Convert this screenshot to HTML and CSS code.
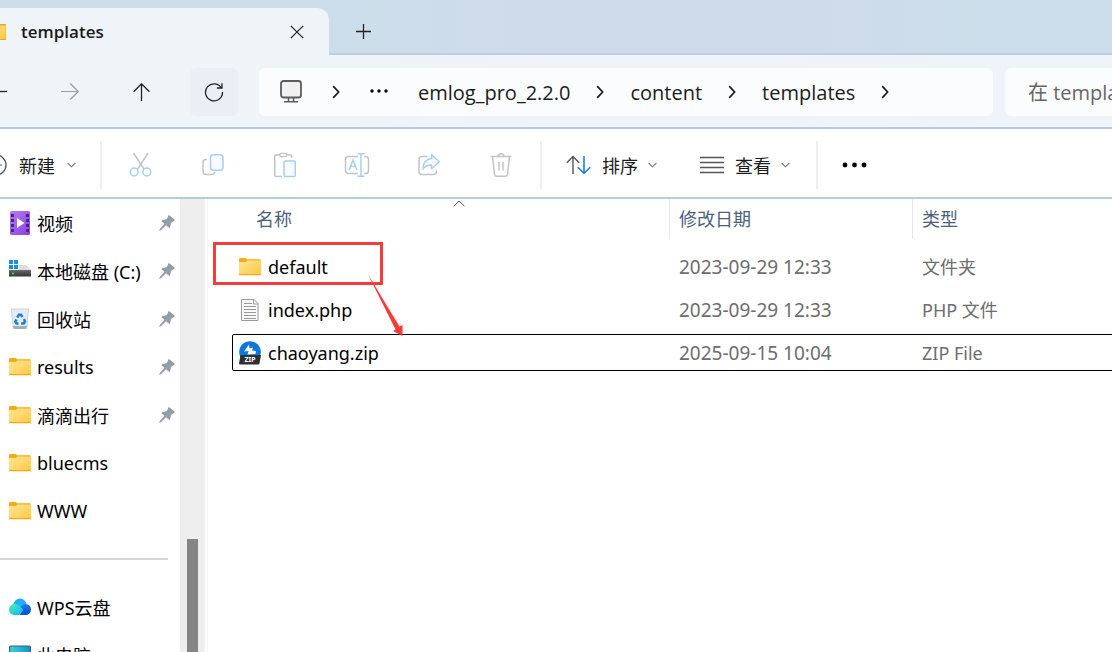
FILE: index.html
```html
<!DOCTYPE html>
<html lang="zh-CN">
	<head>
		<meta charset="UTF-8">
		<title>templates</title>
		<link rel="stylesheet" href="styles.css">
	</head>
	<body>
		<!-- 公用图标 -->
		<svg class="defs" width="0" height="0" aria-hidden="true">
			<defs>
				<linearGradient id="g-folder" x1="0" y1="0" x2="1" y2="1">
					<stop offset="0" stop-color="#ffe69c"/>
					<stop offset="1" stop-color="#ffc83d"/>
				</linearGradient>
				<linearGradient id="g-video" x1="0" y1="0" x2="1" y2="1">
					<stop offset="0" stop-color="#b67cf0"/>
					<stop offset="1" stop-color="#8a3fe0"/>
				</linearGradient>
				<linearGradient id="g-cloud" x1="0" y1="0" x2="1" y2="1">
					<stop offset="0" stop-color="#4ff0a8"/>
					<stop offset="1" stop-color="#08b6ff"/>
				</linearGradient>
				<linearGradient id="g-cloud2" x1="0" y1="0" x2="1" y2="1">
					<stop offset="0" stop-color="#1c8bf5"/>
					<stop offset="1" stop-color="#0a4bd0"/>
				</linearGradient>
				<linearGradient id="g-pc" x1="0" y1="0" x2="1" y2="0">
					<stop offset="0" stop-color="#37d5de"/>
					<stop offset="1" stop-color="#1590cc"/>
				</linearGradient>
				<linearGradient id="g-disk" x1="0" y1="0" x2="0" y2="1">
					<stop offset="0" stop-color="#6a6a6a"/>
					<stop offset="1" stop-color="#333"/>
				</linearGradient>
			</defs>
			<symbol id="i-folder" viewBox="0 0 22 18">
				<path d="M0 1.5Q0 0 1.5 0H6Q7 0 8 1.2H20.5Q22 1.2 22 2.5V8H0z" fill="#f5ad12"/>
				<path d="M0 4H7L8.2 2.5H22V16.5H0z" fill="url(#g-folder)"/>
				<path d="M0 16H22V16.4Q22 17.3 21 17.3H1Q0 17.3 0 16.4z" fill="#eda81f"/>
			</symbol>
			<symbol id="i-pin" viewBox="0 0 16 16">
				<path d="M9.3.5Q10 0 10.7.5L15.4 4.6Q16 5.3 15.2 5.9L13.4 6.7Q12.3 7.2 12 8.2L11 12.4Q10.6 13.3 9.8 12.6L7 10.3L1.5 15.5L.2 15.8L.5 14.5L5.3 8.8L2.8 6.4Q2.3 5.6 3.2 5.2L7.2 4.3Q8 4 8.3 3.2z" fill="#949da5"/>
			</symbol>
			<symbol id="i-right" viewBox="0 0 8 14">
				<path d="M1.2 1.2L6.6 7L1.2 12.8" fill="none" stroke="#1b1b1b" stroke-width="1.7"/>
			</symbol>
			<symbol id="i-down" viewBox="0 0 9 6">
				<path d="M.6 1L4.5 4.8L8.4 1" fill="none" stroke="#777" stroke-width="1.1"/>
			</symbol>
		</svg>

		<div class="window">
			<div class="titlebar">
				<div class="tab">
					<svg class="tab-icon" width="6" height="16" viewBox="16 1 6 16"><path d="M0 1H22V17H0z" fill="#eda81f"/><path d="M0 2.5H21.5V16H0z" fill="url(#g-folder)"/></svg>
					<span class="tab-title">templates</span>
					<button class="icon-btn tab-close" aria-label="关闭"><svg width="14" height="14" viewBox="0 0 14 14"><path d="M.8.8L13.2 13.2M13.2.8L.8 13.2" stroke="#222" stroke-width="1.2"/></svg></button>
				</div>
				<button class="icon-btn tab-add" aria-label="新标签页"><svg width="15" height="15" viewBox="0 0 15 15"><path d="M7.5 0V15M0 7.5H15" stroke="#222" stroke-width="1.3"/></svg></button>
			</div>

			<div class="navbar">
				<div class="nav-btns">
					<button class="nav-btn nav-back" aria-label="后退"><svg width="7" height="20" viewBox="0 0 7 20"><path d="M0 9.5H7" stroke="#222" stroke-width="1.3"/></svg></button>
					<button class="nav-btn" aria-label="前进" disabled><svg width="18" height="18" viewBox="0 0 18 18"><path d="M0 8.5H17.3M9.3.5L17.3 8.5L9.3 16.5" fill="none" stroke="#999ea3" stroke-width="1.2"/></svg></button>
					<button class="nav-btn" aria-label="上移"><svg width="18" height="18" viewBox="0 0 18 18"><path d="M8.5 18V.8M.6 8.8L8.5.8L16.4 8.8" fill="none" stroke="#222" stroke-width="1.3"/></svg></button>
					<button class="nav-btn active" aria-label="刷新"><svg width="20" height="20" viewBox="0 0 20 20"><path d="M17.6 6.5A8.5 8.5 0 1 0 18.5 10M18 1.2V6H12.9" fill="none" stroke="#222" stroke-width="1.3"/></svg></button>
				</div>
				<nav class="address" aria-label="路径">
					<svg width="22" height="25" viewBox="0 0 22 25"><rect x="1" y="1" width="20" height="16.5" rx="2.5" fill="#f1f1f1" stroke="#5c5c5c" stroke-width="1.8"/><path d="M8.5 18V21.5M13.5 18V21.5M4 21.7H18" stroke="#5c5c5c" stroke-width="1.6"/></svg>
					<svg width="8" height="14"><use href="#i-right"/></svg>
					<button class="icon-btn more" aria-label="更多"><svg width="18" height="6" viewBox="0 0 18 6"><circle cx="2" cy="2" r="1.7"/><circle cx="9" cy="2" r="1.7"/><circle cx="16" cy="2" r="1.7"/></svg></button>
					<div class="crumbs">
						<a href="#">emlog_pro_2.2.0</a>
						<svg width="8" height="14"><use href="#i-right"/></svg>
						<a href="#">content</a>
						<svg width="8" height="14"><use href="#i-right"/></svg>
						<a href="#">templates</a>
						<svg width="8" height="14"><use href="#i-right"/></svg>
					</div>
				</nav>
				<input class="search" type="text" placeholder="在 templates 中搜索" aria-label="搜索">
			</div>

			<div class="toolbar">
				<button class="tool-btn new-btn">
					<svg width="7" height="22" viewBox="0 0 7 22"><path d="M-4 1A10 10 0 0 1-4 21" fill="none" stroke="#555" stroke-width="1.3"/><path d="M0 11H2" stroke="#4aa0e0" stroke-width="1.3"/></svg>
					<span>新建</span>
					<svg width="9" height="6"><use href="#i-down"/></svg>
				</button>
				<div class="tool-group">
					<button class="tool-icon" aria-label="剪切" disabled><svg width="24" height="26" viewBox="0 0 24 26"><path d="M4.5 1L15.5 18M19 1L8 18" fill="none" stroke="#c3c3c3" stroke-width="1.5"/><circle cx="5.2" cy="20" r="3.9" fill="#fff" stroke="#a3d0f2" stroke-width="1.5"/><circle cx="17.8" cy="20" r="3.9" fill="#fff" stroke="#a3d0f2" stroke-width="1.5"/></svg></button>
					<button class="tool-icon" aria-label="复制" disabled><svg width="24" height="26" viewBox="0 0 24 26"><path d="M6 7.5H5Q2 7.5 2 10.5V19Q2 22.5 5 22.5H10Q13 22.5 14 20" fill="none" stroke="#c3c3c3" stroke-width="1.5"/><rect x="9.5" y="2.7" width="12.5" height="15.5" rx="3" fill="#f7fbff" stroke="#a3d0f2" stroke-width="1.5"/></svg></button>
					<button class="tool-icon" aria-label="粘贴" disabled><svg width="24" height="26" viewBox="0 0 24 26"><path d="M8 3H3Q1.7 3 1.7 4.3V23Q1.7 24.4 3 24.4H9M13 3H17.5Q18.6 3 18.6 4.3V6" fill="none" stroke="#c3c3c3" stroke-width="1.5"/><rect x="6.7" y="1.4" width="7" height="3.2" rx="1.6" fill="#fff" stroke="#c3c3c3" stroke-width="1.4"/><rect x="11" y="9" width="11.3" height="15.4" rx="1" fill="#f7fbff" stroke="#a3d0f2" stroke-width="1.5"/></svg></button>
					<button class="tool-icon" aria-label="重命名" disabled><svg width="26" height="26" viewBox="0 0 26 26"><path d="M14 4.5H4.5Q1.5 4.5 1.5 7.5V18.5Q1.5 21.5 4.5 21.5H14M20 4.5H21.5Q24.5 4.5 24.5 7.5V18.5Q24.5 21.5 21.5 21.5H20" fill="none" stroke="#c3c3c3" stroke-width="1.5"/><path d="M5 18L9 8L13 18M6.5 14.5H11.5M13.5 1.7H20.5M13.5 24.3H20.5M17 1.7V24.3" fill="none" stroke="#a3d0f2" stroke-width="1.5"/></svg></button>
					<button class="tool-icon" aria-label="共享" disabled><svg width="24" height="26" viewBox="0 0 24 26"><path d="M10 4.5H5Q2 4.5 2 7.5V19.5Q2 22.5 5 22.5H16.5Q19.5 22.5 19.5 19.5V18.5" fill="none" stroke="#c3c3c3" stroke-width="1.5"/><path d="M14.5 2.7L22.3 9.8L14.5 16.8V13Q9 13 6 17Q6.5 7 14.5 6.5z" fill="#f7fbff" stroke="#a3d0f2" stroke-width="1.5" stroke-linejoin="round"/></svg></button>
					<button class="tool-icon" aria-label="删除" disabled><svg width="24" height="26" viewBox="0 0 24 26"><path d="M1.5 4.5H22.5M3.5 4.5L5.5 22.5Q5.7 24.3 7.5 24.3H16.5Q18.3 24.3 18.5 22.5L20.5 4.5M9 4.5Q9 1.7 12 1.7Q15 1.7 15 4.5M10 10V18.5M14 10V18.5" fill="none" stroke="#c3c3c3" stroke-width="1.5"/></svg></button>
				</div>
				<div class="tool-group menus">
					<button class="tool-btn">
						<svg width="26" height="20" viewBox="0 0 26 20"><path d="M7 19V1.5M.8 7.7L7 1.5L13.2 7.7" fill="none" stroke="#555" stroke-width="1.4"/><path d="M18 1V18.3M11.7 12.2L18 18.3L24.3 12.2" fill="none" stroke="#0f7bd4" stroke-width="1.5"/></svg>
						<span>排序</span>
						<svg width="9" height="6"><use href="#i-down"/></svg>
					</button>
					<button class="tool-btn">
						<svg width="25" height="18" viewBox="0 0 25 18"><path d="M0 1.5H24M0 6.5H24M0 11.5H24M0 16.5H24" stroke="#555" stroke-width="1.3"/></svg>
						<span>查看</span>
						<svg width="9" height="6"><use href="#i-down"/></svg>
					</button>
				</div>
				<button class="icon-btn dots" aria-label="更多选项"><svg width="25" height="6" viewBox="0 0 25 6"><circle cx="3" cy="3" r="2.4"/><circle cx="12.5" cy="3" r="2.4"/><circle cx="22" cy="3" r="2.4"/></svg></button>
			</div>

			<div class="content">
				<aside class="sidebar">
					<ul class="side-list">
						<li>
							<svg class="side-icon" viewBox="0 0 22 24"><rect x="1" width="20" height="24" rx="1.5" fill="url(#g-video)"/><path d="M2 3H5V6H2zM2 8H5V11H2zM2 13H5V16H2zM2 18H5V21H2zM17 3H20V6H17zM17 8H20V11H17zM17 13H20V16H17zM17 18H20V21H17z" fill="#47248a"/><path d="M8 7L15.5 12L8 17z" fill="#fff"/></svg>
							<a href="#">视频</a>
							<svg class="pin"><use href="#i-pin"/></svg>
						</li>
						<li>
							<svg class="side-icon" viewBox="0 0 22 24"><path d="M3 6H17L22 11H0z" fill="#dcdcdc"/><path d="M0 11H22V17.5H0z" fill="url(#g-disk)"/><path d="M3 13.5H5V15.5H3z" fill="#2be04b"/><path d="M0 1H10V11H0z" fill="#fff"/><path d="M0 1H4V5H0zM5 1H9V5H5zM0 6H4V10H0zM5 6H9V10H5z" fill="#1590e0"/></svg>
							<a href="#">本地磁盘 (C:)</a>
							<svg class="pin"><use href="#i-pin"/></svg>
						</li>
						<li>
							<svg class="side-icon" viewBox="0 0 22 24"><path d="M2.5 2H19.5L18 20H4z" fill="#e6ebef" stroke="#d0d5d9"/><path d="M4 19H18L17.5 22H4.5z" fill="#a9adb0"/><g fill="none" stroke="#1583d8" stroke-width="2.5"><path d="M8.2 10.5L10 7.8H12L13.5 10"/><path d="M15 12L16 14.5L14.8 16.5H12"/><path d="M9.5 16.5H7.5L6.3 14.5L7.5 12.5"/></g></svg>
							<a href="#">回收站</a>
							<svg class="pin"><use href="#i-pin"/></svg>
						</li>
						<li>
							<svg class="side-icon"><use href="#i-folder"/></svg>
							<a href="#">results</a>
							<svg class="pin"><use href="#i-pin"/></svg>
						</li>
						<li>
							<svg class="side-icon"><use href="#i-folder"/></svg>
							<a href="#">滴滴出行</a>
							<svg class="pin"><use href="#i-pin"/></svg>
						</li>
						<li>
							<svg class="side-icon"><use href="#i-folder"/></svg>
							<a href="#">bluecms</a>
						</li>
						<li>
							<svg class="side-icon"><use href="#i-folder"/></svg>
							<a href="#">WWW</a>
						</li>
						<li class="divider" role="separator"></li>
						<li>
							<svg class="side-icon" viewBox="0 0 22 24"><circle cx="11" cy="10" r="6.5" fill="#25aef8"/><circle cx="16.5" cy="14.5" r="5.5" fill="url(#g-cloud2)"/><path d="M10 20L16 13.5L20 18L16.5 20z" fill="#0d56d8"/><path d="M5.3 9Q8 8.6 10 10.5L14.5 15L10 20H5.5Q0 19.5 0 14.5Q.3 9.5 5.3 9z" fill="url(#g-cloud)"/></svg>
							<a href="#">WPS云盘</a>
						</li>
						<li>
							<svg class="side-icon" viewBox="0 0 22 24"><rect x=".6" y="3" width="20.8" height="15" rx="1" fill="url(#g-pc)" stroke="#4d5d66" stroke-width="1.2"/><path d="M6 21H16" stroke="#777" stroke-width="2"/></svg>
							<a href="#">此电脑</a>
						</li>
					</ul>
					<div class="scrollbar"><div class="thumb"></div></div>
				</aside>

				<main class="files">
					<table class="file-table">
						<thead>
							<tr>
								<th class="name">名称<svg class="sort-mark" width="12" height="7" viewBox="0 0 12 7"><path d="M.6 6.2L6 1L11.4 6.2" fill="none" stroke="#555"/></svg></th>
								<th>修改日期</th>
								<th>类型</th>
							</tr>
						</thead>
						<tbody>
							<tr>
								<td class="name"><svg class="file-icon"><use href="#i-folder"/></svg>default</td>
								<td class="date">2023-09-29 12:33</td>
								<td>文件夹</td>
							</tr>
							<tr>
								<td class="name"><svg class="file-icon" viewBox="0 0 22 24"><path d="M2.5 1.5H15L19 5.5V22.5H2.5z" fill="#fafafa" stroke="#999"/><path d="M14.5 1.5V6H19" fill="none" stroke="#999"/><path d="M5 5.5H13M5 8.5H17M5 11.5H17M5 14.5H17M5 17.5H17M5 20.5H17" stroke="#999"/></svg>index.php</td>
								<td class="date">2023-09-29 12:33</td>
								<td>PHP 文件</td>
							</tr>
							<tr class="focus">
								<td class="name"><svg class="file-icon" viewBox="0 0 22 24"><circle cx="11" cy="11" r="10.8" fill="#0a78dc"/><path d="M10 3.5L5 10.5L9.5 10L8.5 13.5L16.5 13L17 10L13 9.5L14 6.5L10.5 7.5z" fill="#fff"/><path d="M1.5 14H22L20.5 22.5Q20.3 23.5 19 23.5H1Q0 23.5 0 22.5z" fill="#2d2f33"/><text x="11" y="21" class="zip-label">ZIP</text></svg>chaoyang.zip</td>
								<td class="date">2025-09-15 10:04</td>
								<td>ZIP File</td>
							</tr>
						</tbody>
					</table>
					<!-- 标注: 红框和箭头 -->
					<div class="mark-box"></div>
					<svg class="mark-arrow" width="38" height="64" viewBox="0 0 38 64"><path d="M.5.5L32.5 53.5L35.5 52L35.5 63L26 58L28.5 56.5z" fill="#f73b3b"/></svg>
				</main>
			</div>
		</div>
	</body>
</html>
```

FILE: styles.css
```css
* {
	padding: 0;
	margin: 0;
	box-sizing: border-box;
}
html,body {
	height: 100%;
}
body {
	overflow: hidden;
	font-family: "Noto Sans", "Noto Sans CJK SC", sans-serif;
	font-size: 18px;
	color: #000;
	background: #fff;
}
button {
	border: none;
	background: none;
	font: inherit;
	color: inherit;
}
a {
	color: inherit;
	text-decoration: none;
}
svg {
	flex: none;
}
.defs {
	position: absolute;
}
.window {
	display: flex;
	flex-direction: column;
	height: 100%;
}
.icon-btn {
	display: flex;
	align-items: center;
	justify-content: center;
}

/*标题栏*/
.titlebar {
	display: flex;
	align-items: flex-end;
	flex: none;
	height: 55px;
	background: linear-gradient(90deg, #ccdeeb 30%, #cfdbeb 50%, #cfdbeb 70%, #ccdeeb 90%);
	box-shadow: inset 0 -2px #bfcde0;
}
.tab {
	display: flex;
	align-items: center;
	width: 329px;
	height: 47px;
	background: #eff4f9;
	border-radius: 0 12px 0 0;
}
.tab-title {
	flex: 1;
	padding-left: 15px;
	font-family: "Open Sans", "Noto Sans CJK SC", sans-serif;
	font-size: 17px;
	font-weight: 600;
	color: #1b1b1b;
}
.tab-close {
	width: 32px;
	height: 32px;
	margin-right: 16px;
}
.tab-add {
	width: 32px;
	height: 47px;
	margin-left: 18px;
}

/*导航栏*/
.navbar {
	display: flex;
	align-items: center;
	flex: none;
	height: 74px;
	padding-top: 2px;
	background: linear-gradient(90deg, #eff4f9 30%, #f0f3f9 50%, #f0f3f9 70%, #eef4f9 90%);
	border-bottom: 2px solid #bccbda;
}
.nav-btns {
	display: flex;
	gap: 24px;
	margin-right: 21px;
}
.nav-btn {
	display: flex;
	align-items: center;
	justify-content: center;
	width: 48px;
	height: 48px;
	border-radius: 6px;
}
.nav-back {
	justify-content: flex-start;
	width: 22px;
}
.nav-btn.active {
	background: #ebeff5;
}
.address {
	display: flex;
	align-items: center;
	flex: 1;
	gap: 30px;
	height: 48px;
	padding-left: 21px;
	background: #fbfcfe;
	border-radius: 6px;
	font-family: "Open Sans", "Noto Sans CJK SC", sans-serif;
	font-size: 20px;
	color: #1b1b1b;
}
.crumbs {
	display: flex;
	align-items: center;
	gap: 26px;
}
.more {
	height: 48px;
}
.search {
	width: 107px;
	height: 48px;
	margin-left: 12px;
	padding-left: 23px;
	border: none;
	border-radius: 6px 0 0 6px;
	background: #fbfcfe;
	font-family: "Open Sans", "Noto Sans CJK SC", sans-serif;
	font-size: 20px;
}
.search::placeholder {
	color: #666;
}

/*工具栏*/
.toolbar {
	display: flex;
	align-items: center;
	flex: none;
	height: 70px;
	padding-top: 4px;
	border-bottom: 2px solid #bccbda;
	color: #1b1b1b;
}
.tool-btn {
	display: flex;
	align-items: center;
	gap: 10px;
	height: 48px;
}
.new-btn {
	width: 100px;
	gap: 12px;
}
.tool-group {
	display: flex;
	gap: 24px;
	padding: 0 15px;
	border: solid #eee;
	border-width: 0 2px;
}
.tool-icon {
	display: flex;
	align-items: center;
	justify-content: center;
	width: 48px;
	height: 48px;
}
.menus {
	gap: 43px;
	padding: 0 26px 0 24px;
	border-left: none;
}
.dots {
	width: 72px;
	height: 48px;
}

/*侧边栏*/
.content {
	display: flex;
	flex: 1;
	min-height: 0;
}
.sidebar {
	display: flex;
	width: 208px;
	border-right: 1px solid #f3f3f3;
	overflow: hidden;
}
.side-list {
	width: 180px;
	list-style: none;
}
.side-list li {
	display: flex;
	align-items: center;
	height: 48px;
	padding: 0 5px 0 9px;
}
.side-list a {
	flex: 1;
	padding-left: 6px;
	white-space: nowrap;
}
.side-icon {
	width: 22px;
	height: 24px;
}
.pin {
	width: 16px;
	height: 16px;
}
.side-list .divider::before {
	content: "";
	width: 100%;
	height: 2px;
	background: #d5d5d5;
}
.side-list .divider {
	padding: 0 12px 0 0;
}
.scrollbar {
	display: flex;
	justify-content: center;
	align-items: flex-end;
	width: 25px;
	background: #eee;
}
.thumb {
	width: 11px;
	height: 25%;
	background: #858585;
}

/*文件列表*/
.files {
	position: relative;
	flex: 1;
	overflow: hidden;
}
.file-table,
.file-table thead,
.file-table tbody {
	display: block;
}
.file-table {
	margin-left: 24px;
}
.file-table tr {
	display: grid;
	grid-template-columns: 437px 243px 1fr;
}
.file-table th {
	position: relative;
	height: 40px;
	padding-left: 9px;
	border-left: 1px solid #e5e5e5;
	font-weight: normal;
	line-height: 40px;
	text-align: left;
	color: #4c607a;
}
.file-table th.name {
	padding-left: 24px;
	border-left: none;
}
.sort-mark {
	position: absolute;
	top: 1px;
	left: 221px;
}
.file-table tbody {
	display: flex;
	flex-direction: column;
	gap: 6px;
	padding-top: 9px;
}
.file-table tbody tr {
	margin-right: -4px;
	border: 1px solid transparent;
	border-radius: 2px;
}
.file-table tr.focus {
	border-color: #000;
}
.file-table td {
	height: 35px;
	padding-left: 9px;
	line-height: 36px;
	color: #6d6d6d;
}
.file-table td.date {
	font-size: 19px;
}
.file-table td.name {
	display: flex;
	align-items: center;
	gap: 7px;
	padding-left: 6px;
	color: #000;
}
.file-icon {
	width: 22px;
	height: 24px;
}
.zip-label {
	font: bold 7px "Noto Sans", sans-serif;
	fill: #fff;
	text-anchor: middle;
}

/*标注*/
.mark-box {
	position: absolute;
	top: 43px;
	left: 5px;
	width: 170px;
	height: 43px;
	border: 3px solid #f73b3b;
}
.mark-arrow {
	position: absolute;
	top: 74px;
	left: 159px;
}
```
